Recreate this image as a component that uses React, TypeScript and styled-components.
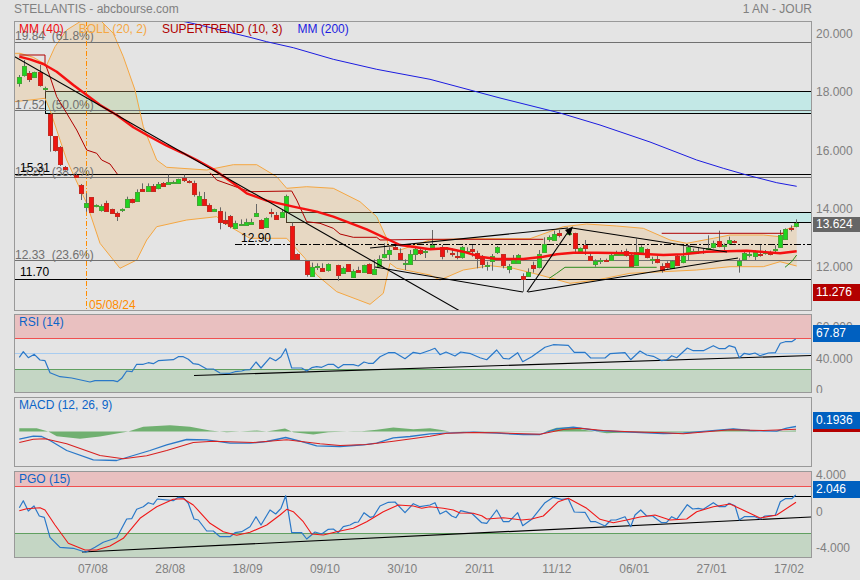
import styled, { createGlobalStyle } from "styled-components";

type Pt = [number, number];

// traced from 3x crops, so every series carries the offset of its crop
const trace = (ox: number, oy: number, flat: number[]): Pt[] => {
  const out: Pt[] = [];
  for (let i = 0; i < flat.length; i += 2) out.push([ox + flat[i] / 3, oy + flat[i + 1] / 3]);
  return out;
};
const str = (pts: Pt[]) => pts.map(([x, y]) => `${x.toFixed(1)},${y.toFixed(1)}`).join(" ");

const GlobalStyle = createGlobalStyle`
  html, body {
    margin: 0;
    padding: 0;
    background: #e4e4e4;
    font-family: "Liberation Sans", Arial, sans-serif;
    font-size: 12px;
  }
`;

const Page = styled.div`
  width: 860px;
  height: 580px;
  overflow: hidden;
  background: #e4e4e4;
  color: #808080;
`;

const Header = styled.header`
  height: 21px;
  display: flex;
  align-items: flex-start;
  justify-content: space-between;
  padding: 2px 48px 0 14px;
  box-sizing: border-box;
  line-height: 14px;
`;

const PanelRow = styled.section<{ $h: number; $mt?: number; $clip?: boolean }>`
  display: flex;
  height: ${(p) => p.$h}px;
  margin-top: ${(p) => p.$mt ?? 0}px;
  padding-left: 14px;
  overflow: ${(p) => (p.$clip ? "hidden" : "visible")};
`;

const Frame = styled.div`
  position: relative;
  width: 798px;
  height: 100%;
  box-sizing: border-box;
  border: 1px solid #999;
  overflow: hidden;
`;

const ChartSvg = styled.svg`
  display: block;
  width: 100%;
  height: 100%;
`;

const Legend = styled.div`
  position: absolute;
  top: 0;
  left: 4px;
  display: flex;
  gap: 15px;
  line-height: 15px;
`;

const LegendItem = styled.span<{ $color: string }>`
  color: ${(p) => p.$color};
`;

const Axis = styled.div`
  position: relative;
  width: 48px;
`;

// ticks are evenly spaced, so the column only needs its start and its span
const AxisTicks = styled.div<{ $start: number; $span: number }>`
  display: flex;
  flex-direction: column;
  justify-content: space-between;
  margin-top: ${(p) => p.$start}px;
  height: ${(p) => p.$span}px;
  padding-left: 4px;
  line-height: 14px;
`;

const ValueTag = styled.span<{ $y: number; $h: number; $bg: string }>`
  position: absolute;
  left: 1px;
  right: 0;
  top: ${(p) => p.$y}px;
  height: ${(p) => p.$h}px;
  line-height: ${(p) => p.$h}px;
  padding-left: 3px;
  background: ${(p) => p.$bg};
  color: #fff;
`;

const DateAxis = styled.div`
  display: grid;
  grid-template-columns: repeat(10, 77.33px);
  padding-left: 54.3px;
  height: 22px;
  line-height: 22px;
  text-align: center;
`;

const Note = styled.text<{ $color: string }>`
  fill: ${(p) => p.$color};
  font-size: 12px;
  font-family: "Liberation Sans", Arial, sans-serif;
  white-space: pre;
`;

const GREY_LINE = "#707070";
const MID_Y = 160;

// zoom x, body top, body bottom, wick high, wick low, 1 = up day
const candlesTop: number[][] = [
  [58, 230, 250, 225, 260, 1],
  [73, 198, 224, 180, 230, 1],
  [88, 218, 238, 213, 246, 0],
  [103, 217, 230, 215, 232, 1],
  [120, 215, 254, 195, 260, 0],
  [136, 265, 268, 260, 274, 1],
  [151, 342, 404, 342, 455, 0],
  [166, 408, 450, 408, 455, 0],
];

const candlesMid: number[][] = [
  [181, -40, 12, -42, 18, 0], [196, 22, 28, 18, 32, 0], [228, 45, 50, 40, 52, 0],
  [244, 75, 98, 72, 120, 0], [258, 130, 140, 100, 155, 1], [272, 112, 155, 112, 158, 0],
  [288, 135, 138, 133, 142, 1], [303, 137, 150, 133, 155, 1], [318, 128, 152, 122, 155, 0],
  [336, 148, 158, 146, 160, 0], [352, 160, 167, 155, 183, 0], [367, 148, 151, 145, 156, 1],
  [382, 118, 140, 110, 144, 1], [397, 118, 127, 116, 130, 0], [412, 95, 122, 88, 124, 1],
  [427, 87, 92, 70, 94, 0], [445, 78, 92, 70, 94, 1], [460, 78, 92, 72, 94, 0],
  [475, 72, 85, 66, 88, 1], [490, 70, 77, 66, 80, 0], [505, 67, 73, 44, 75, 1],
  [520, 66, 70, 62, 72, 1], [535, 58, 70, 56, 72, 1], [552, 55, 60, 44, 66, 0],
  [568, 62, 66, 60, 70, 0], [583, 70, 103, 62, 110, 0], [598, 108, 135, 95, 137, 1],
  [613, 117, 135, 96, 138, 0], [628, 135, 152, 130, 154, 0], [643, 148, 152, 146, 154, 1],
  [660, 154, 185, 142, 208, 0], [675, 180, 190, 155, 195, 0], [690, 168, 197, 165, 205, 0],
  [706, 190, 205, 182, 207, 1], [722, 191, 193, 178, 196, 1], [737, 186, 196, 176, 198, 1],
  [752, 186, 193, 176, 194, 1], [768, 160, 167, 132, 170, 1], [784, 180, 203, 178, 204, 0],
  [799, 175, 200, 172, 202, 1], [814, 155, 158, 146, 172, 0], [829, 165, 177, 156, 179, 0],
  [845, 157, 170, 150, 172, 1], [858, 108, 157, 104, 160, 1], [877, 198, 297, 188, 299, 0],
  [892, 283, 296, 280, 298, 0], [922, 303, 343, 303, 350, 0], [937, 322, 347, 308, 349, 1],
  [952, 318, 320, 310, 330, 1], [967, 324, 332, 310, 334, 0], [985, 313, 329, 310, 335, 1],
  [1015, 316, 345, 314, 362, 0], [1030, 325, 338, 320, 342, 1], [1045, 313, 332, 312, 334, 0],
  [1060, 332, 350, 328, 353, 1], [1075, 331, 335, 320, 338, 0], [1092, 316, 336, 314, 338, 1],
  [1108, 313, 338, 310, 340, 0], [1123, 328, 341, 298, 343, 1], [1138, 298, 318, 286, 322, 1],
  [1153, 283, 292, 250, 295, 1], [1168, 270, 282, 262, 300, 1], [1185, 260, 268, 255, 270, 0],
  [1200, 280, 296, 265, 300, 0], [1215, 310, 313, 298, 330, 1], [1230, 281, 313, 270, 315, 1],
  [1245, 268, 283, 260, 300, 1], [1260, 271, 280, 262, 285, 0], [1275, 274, 277, 268, 294, 1],
];

const candlesRight: number[][] = [
  [5, 255, 262, 210, 265, 1], [35, 260, 287, 255, 298, 0], [50, 265, 268, 262, 278, 1],
  [65, 278, 283, 265, 290, 0], [80, 288, 292, 270, 298, 0], [95, 262, 290, 258, 296, 1],
  [110, 272, 275, 262, 282, 1], [127, 268, 274, 255, 290, 0], [142, 278, 295, 272, 325, 0],
  [157, 293, 312, 285, 325, 0], [172, 316, 319, 305, 332, 1], [187, 287, 304, 282, 332, 1],
  [202, 262, 276, 258, 282, 1], [220, 283, 314, 282, 325, 0], [236, 319, 328, 312, 340, 1],
  [250, 298, 310, 285, 312, 1], [265, 286, 310, 282, 312, 1], [280, 349, 357, 340, 395, 0],
  [295, 337, 347, 325, 350, 1], [310, 316, 323, 305, 338, 0], [327, 283, 322, 270, 325, 1],
  [343, 251, 275, 232, 278, 1], [358, 232, 238, 226, 245, 1], [373, 222, 241, 212, 243, 1],
  [388, 219, 225, 210, 232, 0], [418, 218, 222, 205, 224, 1], [436, 220, 265, 218, 280, 0],
  [451, 265, 274, 262, 282, 1], [466, 255, 265, 240, 285, 0], [481, 289, 299, 280, 302, 0],
  [496, 302, 311, 298, 320, 1], [511, 300, 302, 294, 312, 1], [527, 300, 302, 296, 306, 0],
  [544, 284, 300, 280, 302, 1], [559, 280, 284, 272, 288, 1], [574, 275, 286, 270, 288, 1],
  [589, 272, 284, 266, 290, 0], [604, 286, 317, 282, 320, 0], [619, 275, 314, 236, 316, 1],
  [634, 262, 275, 256, 278, 1], [652, 268, 292, 265, 295, 0], [667, 296, 300, 290, 312, 1],
  [682, 296, 306, 288, 310, 0], [697, 317, 329, 310, 338, 0], [712, 308, 321, 304, 326, 0],
  [727, 303, 323, 300, 326, 1], [742, 287, 314, 282, 316, 0], [760, 287, 307, 256, 310, 1],
  [775, 260, 280, 256, 302, 1], [790, 274, 277, 266, 282, 1], [805, 273, 275, 262, 282, 1],
  [820, 273, 275, 265, 282, 1], [835, 263, 266, 226, 270, 1], [850, 248, 262, 242, 265, 1],
  [868, 244, 258, 212, 262, 0], [883, 256, 258, 250, 272, 1], [898, 240, 250, 230, 254, 1],
  [912, 244, 246, 240, 250, 0], [928, 302, 314, 295, 338, 1], [943, 280, 296, 275, 298, 1],
  [958, 282, 285, 276, 292, 1], [976, 276, 287, 270, 300, 1], [991, 282, 286, 255, 290, 0],
  [1006, 276, 278, 270, 284, 1], [1021, 276, 283, 272, 286, 0], [1036, 268, 271, 256, 280, 1],
  [1051, 224, 260, 210, 264, 1], [1066, 208, 236, 205, 240, 1], [1083, 204, 208, 196, 214, 0],
  [1099, 190, 199, 178, 202, 1],
];

const mm40 = [
  ...trace(0, 0, [58, 170, 90, 178, 130, 192, 170, 215, 220, 255, 260, 285, 300, 315, 350, 345, 400, 382, 450, 410, 500, 437, 550, 460, 590, 480]),
  ...trace(0, MID_Y, [640, 28, 700, 70, 740, 100, 800, 122, 880, 140, 950, 155, 1000, 170, 1100, 208, 1200, 255, 1290, 268]),
  ...trace(430, MID_Y, [50, 265, 100, 275, 150, 290, 200, 297, 280, 297, 340, 290, 380, 283, 430, 278, 500, 278, 600, 280, 700, 285, 760, 283, 830, 275, 950, 272, 1050, 280, 1100, 274]),
];

const bollUpper = [
  ...trace(0, 0, [43, 160, 60, 160, 100, 172, 140, 195, 165, 140, 200, 90, 240, 65, 270, 60, 300, 60, 340, 100, 370, 170, 405, 270, 430, 380, 470, 480]),
  ...trace(0, MID_Y, [500, 22, 620, 30, 700, 14, 770, 14, 830, 50, 860, 85, 920, 80, 1000, 85, 1080, 125, 1130, 170, 1160, 235, 1165, 255, 1200, 270, 1290, 240]),
  ...trace(430, MID_Y, [100, 236, 300, 236, 400, 200, 470, 192, 560, 198, 640, 205, 720, 240, 770, 250, 850, 235, 900, 225, 1000, 225, 1050, 230, 1065, 210, 1100, 195]),
];

const bollLower = [
  ...trace(0, 0, [43, 160, 43, 305, 90, 300, 135, 295, 150, 330, 200, 480]),
  ...trace(0, MID_Y, [260, 130, 300, 250, 360, 325, 410, 300, 440, 240, 470, 200, 560, 180, 650, 170, 690, 200, 750, 235, 860, 235, 915, 295, 950, 345, 1010, 395, 1110, 433, 1150, 400, 1170, 310, 1190, 325, 1290, 345]),
  ...trace(430, MID_Y, [30, 360, 100, 330, 180, 317, 250, 325, 330, 345, 420, 370, 500, 360, 600, 340, 700, 335, 800, 330, 900, 320, 1000, 320, 1050, 305, 1100, 318]),
];

const superRed = [
  trace(0, 0, [58, 165, 135, 165, 135, 190, 150, 230, 170, 290, 200, 340, 230, 390, 260, 450, 290, 460, 305, 480, 330, 492, 352, 522]),
  trace(0, MID_Y, [630, 38, 650, 60, 720, 85, 750, 95, 875, 93, 890, 120, 920, 185, 960, 190, 1000, 205, 1020, 222, 1060, 232, 1130, 232, 1140, 240, 1290, 238]).concat(trace(430, MID_Y, [340, 238])),
  trace(430, MID_Y, [695, 220, 1060, 220]),
];

const superGreen = [
  trace(430, MID_Y, [358, 355, 380, 340, 405, 322, 680, 322]),
  trace(430, MID_Y, [1065, 322, 1085, 305, 1100, 285]),
];

const mm200 = [
  ...trace(0, 0, [540, 62, 600, 75, 660, 90, 750, 112, 800, 125, 880, 143, 1000, 178, 1130, 208, 1290, 238]),
  [500, 98], [560, 113], [600, 125], [650, 142],
  ...trace(430, MID_Y, [800, 0, 880, 25, 950, 45, 1040, 68, 1100, 79]),
] as Pt[];

const rsi = [
  ...trace(0, 310, [58, 142, 70, 125, 85, 143, 103, 133, 120, 150, 135, 152, 150, 188, 180, 200, 215, 204, 270, 216, 285, 212, 340, 212, 352, 215, 365, 205, 380, 183, 396, 185, 410, 163, 430, 163, 445, 158, 460, 161, 475, 152, 520, 149, 535, 140, 550, 140, 565, 148, 580, 161, 595, 163, 620, 177, 640, 177, 660, 189, 690, 190, 705, 185, 725, 183, 735, 180, 750, 179, 768, 156, 783, 174, 810, 143, 827, 152, 843, 140, 857, 116, 875, 174, 905, 174, 920, 183, 935, 173, 950, 170, 965, 172, 985, 163, 1000, 163, 1015, 174, 1030, 164, 1060, 164, 1075, 168, 1092, 156, 1105, 160, 1120, 160, 1140, 140, 1165, 128, 1185, 128, 1215, 146, 1240, 127, 1260, 131, 1290, 121]),
  ...trace(430, 310, [15, 115, 30, 134, 48, 126, 75, 138, 92, 126, 122, 131, 150, 143, 170, 149, 200, 120, 220, 145, 237, 147, 263, 128, 278, 155, 305, 140, 345, 112, 370, 104, 415, 106, 433, 127, 465, 127, 482, 144, 525, 144, 540, 131, 585, 128, 602, 149, 630, 123, 650, 135, 670, 139, 695, 152, 710, 150, 725, 137, 740, 143, 772, 114, 790, 122, 820, 122, 850, 107, 868, 116, 885, 116, 897, 107, 915, 112, 928, 143, 943, 130, 958, 133, 975, 129, 990, 137, 1015, 129, 1036, 128, 1051, 100, 1066, 95, 1085, 95, 1097, 87]),
];

const macdHist = [
  ...trace(0, 310, [58, 353, 110, 353, 145, 363, 170, 377, 240, 385, 300, 378, 385, 363, 430, 349, 510, 344, 570, 349, 630, 360, 680, 365, 720, 363, 770, 360, 800, 363, 855, 354, 880, 365, 940, 372, 985, 365, 1060, 362, 1085, 362, 1130, 358, 1180, 351, 1240, 356, 1290, 353]),
  ...trace(430, 310, [30, 358, 60, 363, 100, 362, 135, 364, 300, 364, 345, 363, 380, 352, 430, 350, 460, 358, 500, 364, 530, 368, 600, 365, 660, 365, 800, 366, 830, 362, 910, 355, 950, 360, 1000, 364, 1098, 360, 1098, 363]),
  ...trace(0, 310, [58, 363]),
];

const macdLine = [
  ...trace(0, 310, [58, 386, 100, 377, 125, 378, 150, 390, 200, 420, 280, 448, 350, 450, 400, 435, 450, 420, 500, 403, 560, 387, 620, 388, 690, 398, 750, 398, 800, 393, 857, 381, 900, 392, 950, 406, 1020, 408, 1090, 403, 1130, 398, 1180, 382, 1230, 378, 1290, 370]),
  ...trace(430, 310, [50, 368, 130, 365, 200, 368, 280, 372, 330, 372, 380, 355, 430, 350, 500, 360, 600, 365, 700, 369, 760, 368, 830, 362, 910, 355, 960, 360, 1040, 362, 1070, 353, 1098, 348]),
];

const macdSignal = [
  ...trace(0, 310, [58, 396, 100, 386, 135, 385, 200, 400, 300, 435, 370, 445, 440, 436, 500, 420, 580, 396, 640, 392, 760, 396, 860, 388, 960, 400, 1020, 405, 1100, 402, 1180, 392, 1290, 377]),
  ...trace(430, 310, [50, 368, 130, 366, 200, 367, 280, 370, 330, 371, 400, 357, 450, 353, 520, 360, 600, 364, 700, 367, 760, 370, 830, 364, 900, 358, 1000, 360, 1098, 356]),
];

const pgoBlue = [
  ...trace(0, 460, [58, 143, 70, 122, 85, 153, 102, 138, 118, 168, 133, 172, 150, 232, 180, 262, 220, 265, 257, 277, 285, 262, 310, 247, 350, 233, 380, 177, 395, 176, 410, 148, 430, 140, 445, 128, 460, 133, 472, 117, 520, 122, 535, 112, 550, 113, 565, 130, 582, 177, 595, 180, 620, 213, 640, 213, 660, 230, 690, 230, 705, 218, 725, 215, 750, 200, 768, 170, 783, 195, 810, 150, 827, 162, 843, 145, 857, 107, 875, 218, 905, 218, 920, 237, 945, 216, 965, 222, 985, 208, 1000, 207, 1015, 218, 1030, 200, 1050, 195, 1065, 187, 1075, 186, 1092, 158, 1110, 172, 1120, 170, 1140, 138, 1165, 127, 1185, 126, 1215, 158, 1240, 131, 1260, 140, 1290, 135]),
  ...trace(430, 460, [15, 128, 30, 162, 48, 153, 65, 168, 78, 173, 92, 152, 125, 160, 155, 188, 170, 190, 200, 150, 220, 185, 237, 185, 263, 158, 278, 197, 305, 178, 345, 128, 370, 112, 395, 118, 415, 116, 433, 156, 465, 157, 482, 185, 497, 185, 525, 198, 543, 180, 558, 180, 585, 170, 602, 200, 615, 165, 632, 150, 650, 168, 668, 168, 695, 188, 710, 187, 725, 170, 740, 178, 772, 134, 788, 147, 805, 145, 820, 148, 850, 128, 868, 140, 885, 140, 897, 130, 915, 137, 928, 180, 943, 170, 975, 170, 990, 177, 1005, 168, 1036, 166, 1051, 125, 1066, 116, 1085, 116, 1097, 105]),
];

const pgoRed = [
  ...trace(0, 460, [58, 152, 80, 146, 120, 143, 135, 150, 165, 195, 205, 250, 255, 270, 290, 270, 330, 258, 370, 235, 420, 175, 470, 140, 520, 118, 550, 116, 580, 135, 630, 190, 670, 215, 710, 226, 750, 217, 800, 195, 840, 165, 860, 148, 880, 155, 910, 185, 935, 222, 970, 225, 1010, 215, 1060, 205, 1100, 185, 1150, 155, 1195, 135, 1240, 138, 1265, 145, 1290, 140]),
  ...trace(430, 460, [40, 145, 70, 150, 90, 159, 130, 160, 155, 167, 170, 177, 220, 173, 275, 180, 305, 177, 340, 168, 385, 125, 415, 115, 470, 145, 510, 178, 550, 188, 590, 180, 630, 171, 675, 165, 720, 180, 770, 177, 800, 155, 850, 140, 900, 132, 950, 155, 990, 174, 1040, 165, 1098, 127]),
];

const Candle = ({ c, ox, oy }: { c: number[]; ox: number; oy: number }) => {
  const [zx, top, bot, hi, lo, up] = c;
  const x = Math.round(ox + zx / 3) + 0.5;
  const y1 = Math.round(oy + top / 3) + 0.5;
  const y2 = Math.round(oy + bot / 3) + 0.5;
  return (
    <g>
      <line x1={x} x2={x} y1={oy + hi / 3} y2={oy + lo / 3} stroke="#666" />
      <rect
        x={x - 2}
        y={y1}
        width={4}
        height={Math.max(y2 - y1, 1)}
        fill={up ? "#1fd51f" : "#ee1512"}
        stroke={up ? "#45a535" : "#c42a20"}
      />
    </g>
  );
};

const Line = ({ pts, color, w = 1 }: { pts: Pt[]; color: string; w?: number }) => (
  <polyline points={str(pts)} fill="none" stroke={color} strokeWidth={w} strokeLinejoin="round" />
);

const Seg = ({ a, b, color = "#000", w = 1, dash }: { a: Pt; b: Pt; color?: string; w?: number; dash?: string }) => (
  <line x1={a[0]} y1={a[1]} x2={b[0]} y2={b[1]} stroke={color} strokeWidth={w} strokeDasharray={dash} />
);

const MainChart = () => (
  <ChartSvg viewBox="15 22 796 288">
    <rect x={45.5} y={91.5} width={770} height={22} fill="#c3e8e6" stroke="#000" />
    <rect x={286.5} y={212.5} width={530} height={10} fill="#c3e8e6" stroke="#000" />
    <polygon points={str([...bollUpper, ...[...bollLower].reverse()])} fill="#f0be78" fillOpacity={0.3} />
    <Line pts={bollUpper} color="#f5a742" />
    <Line pts={bollLower} color="#f5a742" />

    <Seg a={[14, 42.5]} b={[812, 42.5]} color={GREY_LINE} />
    <Seg a={[14, 110.5]} b={[812, 110.5]} color={GREY_LINE} />
    <Seg a={[14, 177.5]} b={[812, 177.5]} color={GREY_LINE} />
    <Seg a={[14, 260.5]} b={[812, 260.5]} color={GREY_LINE} />
    <Seg a={[14, 174.5]} b={[812, 174.5]} />
    <Seg a={[14, 279.5]} b={[812, 279.5]} />
    <Seg a={[235, 244.5]} b={[812, 244.5]} dash="7 2 2 2" />
    <Seg a={[86.5, 21]} b={[86.5, 310]} color="#ff8c00" dash="5 2 1 2" />

    <Note $color="#707070" x={15} y={40}>19.84  (61.8%)</Note>
    <Note $color="#707070" x={15} y={109}>17.52  (50.0%)</Note>
    <Note $color="#707070" x={15} y={176}>15.20  (38.2%)</Note>
    <Note $color="#707070" x={15} y={259}>12.33  (23.6%)</Note>
    <Note $color="#000" x={20} y={172}>15.31</Note>
    <Note $color="#000" x={241} y={242}>12.90</Note>
    <Note $color="#000" x={20} y={276}>11.70</Note>
    <Note $color="#ff8c00" x={89} y={308.5}>05/08/24</Note>

    {candlesTop.map((c) => <Candle key={`t${c[0]}`} c={c} ox={0} oy={0} />)}
    {candlesMid.map((c) => <Candle key={`m${c[0]}`} c={c} ox={0} oy={MID_Y} />)}
    {candlesRight.map((c) => <Candle key={`r${c[0]}`} c={c} ox={430} oy={MID_Y} />)}

    {superRed.map((pts, i) => <Line key={i} pts={pts} color="#b00000" />)}
    {superGreen.map((pts, i) => <Line key={i} pts={pts} color="#2e8b1e" />)}
    <Line pts={mm200} color="#1c1ce0" />
    <Line pts={mm40} color="#f51010" w={2.4} />

    <Seg a={[14.5, 56.7]} b={[460, 311]} w={1.1} />
    <Seg a={[370, 248]} b={[568, 228]} w={1.1} />
    <Seg a={[375, 267]} b={[523, 292]} w={1.1} />
    <Seg a={[527, 292]} b={[568, 232]} w={1.1} />
    <Seg a={[528, 292]} b={[738, 258]} w={1.1} />
    <Seg a={[572, 228]} b={[727, 252]} w={1.1} />
    <polygon points="565,230 573,226.5 570,236" fill="#000" />
  </ChartSvg>
);

const RsiChart = () => (
  <ChartSvg viewBox="15 315 796 77">
    <rect x={14} y={314} width={800} height={24} fill="#e9c0c0" />
    <rect x={14} y={369} width={800} height={24} fill="#c4d6c4" />
    <Seg a={[14, 338.5]} b={[812, 338.5]} color="#f05050" />
    <Seg a={[14, 353.5]} b={[812, 353.5]} color="#a8ccf0" />
    <Seg a={[14, 369.5]} b={[812, 369.5]} color="#60a060" />
    <Seg a={[194, 375.5]} b={[811, 355.5]} w={1.2} />
    <Line pts={rsi} color="#2a78c8" w={1.2} />
  </ChartSvg>
);

const MacdChart = () => (
  <ChartSvg viewBox="15 398 796 67">
    <polygon points={str(macdHist)} fill="#70b070" />
    <Line pts={macdLine} color="#2a78c8" w={1.3} />
    <Line pts={macdSignal} color="#d82020" w={1.1} />
  </ChartSvg>
);

const PgoChart = () => (
  <ChartSvg viewBox="15 472 796 85">
    <rect x={14} y={471} width={800} height={15} fill="#e9c0c0" />
    <rect x={14} y={533} width={800} height={26} fill="#c4d6c4" />
    <Seg a={[14, 486.5]} b={[812, 486.5]} color="#f05050" />
    <Seg a={[14, 533.5]} b={[812, 533.5]} color="#60a060" />
    <Seg a={[158, 496.5]} b={[812, 496.5]} w={1.1} />
    <Seg a={[82, 552]} b={[811, 517]} w={1.2} />
    <Line pts={pgoBlue} color="#2a78c8" w={1.2} />
    <Line pts={pgoRed} color="#f01818" w={1.1} />
  </ChartSvg>
);

const dates = ["07/08", "28/08", "18/09", "09/10", "30/10", "20/11", "11/12", "06/01", "27/01", "17/02"];

export default function App() {
  return (
    <Page>
      <GlobalStyle />
      <Header>
        <span>STELLANTIS - abcbourse.com</span>
        <span>1 AN - JOUR</span>
      </Header>

      <PanelRow $h={290}>
        <Frame>
          <MainChart />
          <Legend>
            <LegendItem $color="#f01010">MM (40)</LegendItem>
            <LegendItem $color="#f5a742">BOLL (20, 2)</LegendItem>
            <LegendItem $color="#b00000">SUPERTREND (10, 3)</LegendItem>
            <LegendItem $color="#1c1ce0">MM (200)</LegendItem>
          </Legend>
        </Frame>
        <Axis>
          <AxisTicks $start={6} $span={247}>
            <span>20.000</span>
            <span>18.000</span>
            <span>16.000</span>
            <span>14.000</span>
            <span>12.000</span>
          </AxisTicks>
          <ValueTag $y={196} $h={15} $bg="#666">13.624</ValueTag>
          <ValueTag $y={263} $h={17} $bg="#b30000">11.276</ValueTag>
        </Axis>
      </PanelRow>

      <PanelRow $h={79} $mt={3} $clip>
        <Frame>
          <RsiChart />
          <Legend>
            <LegendItem $color="#0a64c8">RSI (14)</LegendItem>
          </Legend>
        </Frame>
        <Axis>
          <AxisTicks $start={6} $span={77}>
            <span>60.000</span>
            <span>40.000</span>
            <span>0</span>
          </AxisTicks>
          <ValueTag $y={11} $h={17} $bg="#0060c0">67.87</ValueTag>
        </Axis>
      </PanelRow>

      <PanelRow $h={70} $mt={4}>
        <Frame>
          <MacdChart />
          <Legend>
            <LegendItem $color="#0a64c8">MACD (12, 26, 9)</LegendItem>
          </Legend>
        </Frame>
        <Axis>
          <AxisTicks $start={24} $span={14}>
            <span>0</span>
          </AxisTicks>
          <ValueTag $y={32} $h={3} $bg="#b30000" />
          <ValueTag $y={15} $h={17} $bg="#0060c0">0.1936</ValueTag>
        </Axis>
      </PanelRow>

      <PanelRow $h={87} $mt={4}>
        <Frame>
          <PgoChart />
          <Legend>
            <LegendItem $color="#0a64c8">PGO (15)</LegendItem>
          </Legend>
        </Frame>
        <Axis>
          <AxisTicks $start={-3} $span={87}>
            <span>4.000</span>
            <span>0</span>
            <span>-4.000</span>
          </AxisTicks>
          <ValueTag $y={10} $h={17} $bg="#0060c0">2.046</ValueTag>
        </Axis>
      </PanelRow>

      <DateAxis>
        {dates.map((d) => <span key={d}>{d}</span>)}
      </DateAxis>
    </Page>
  );
}
